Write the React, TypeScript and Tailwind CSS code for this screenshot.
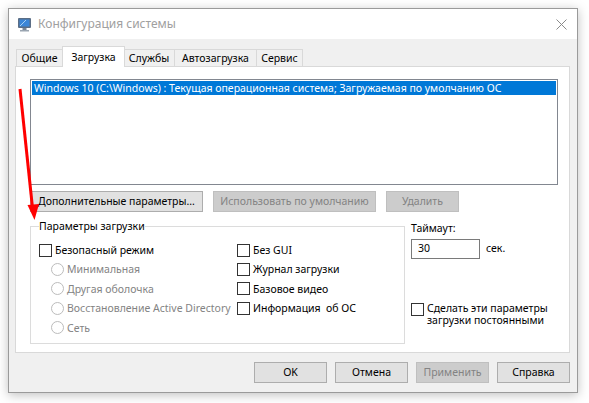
import React from "react";

const font = { fontFamily: '"Segoe UI", "Noto Sans", sans-serif' };

function Btn({
  children,
  w,
  disabled,
}: {
  children: React.ReactNode;
  w: string;
  disabled?: boolean;
}) {
  return (
    <div
      className={
        "h-[21px] flex items-center justify-center border text-[10.5px] leading-none whitespace-nowrap " +
        w +
        (disabled
          ? " bg-[#cccccc] border-[#bfbfbf] text-[#838383]"
          : " bg-[#e1e1e1] border-[#adadad] text-black")
      }
    >
      {children}
    </div>
  );
}

function Check({ label }: { label: string }) {
  return (
    <div className="h-[19.4px] flex items-center">
      <div className="w-[13px] h-[13px] border border-[#333333] bg-white shrink-0" />
      <span className="ml-[3px] text-[10.5px] leading-none text-black whitespace-pre">
        {label}
      </span>
    </div>
  );
}

function Radio({ label }: { label: string }) {
  return (
    <div className="h-[19.4px] flex items-center pl-[12px]">
      <div className="w-[13px] h-[13px] rounded-full border border-[#bcbcbc] bg-white shrink-0" />
      <span className="ml-[3px] text-[10.5px] leading-none text-[#838383] whitespace-nowrap">
        {label}
      </span>
    </div>
  );
}

function Tab({ label, active, w }: { label: string; active?: boolean; w: string }) {
  return active ? (
    <div
      className={
        "h-[21px] -mx-[1px] relative z-10 bg-white border border-b-0 border-[#d9d9d9] flex items-center justify-center text-[10.5px] leading-none text-black " +
        w
      }
    >
      {label}
    </div>
  ) : (
    <div
      className={
        "h-[18px] mt-[3px] bg-[#f0f0f0] border border-b-0 border-[#d9d9d9] -ml-[1px] first:ml-0 flex items-center justify-center text-[10.5px] leading-none text-black " +
        w
      }
    >
      {label}
    </div>
  );
}

function MonitorIcon() {
  return (
    <svg width="15" height="15" viewBox="0 0 15 15">
      <rect x="1" y="1" width="13" height="10" rx="1" fill="#5b6e86" />
      <rect x="2.5" y="2.5" width="10" height="7" fill="#3b86d8" />
      <path d="M3 9 L9 3" stroke="#a9d2f5" strokeWidth="1" />
      <rect x="5.5" y="11" width="4" height="2" fill="#7a8797" />
      <rect x="3" y="13" width="9" height="1.5" fill="#9aa5b1" />
    </svg>
  );
}

export default function App() {
  return (
    <div className="relative w-[589px] h-[403px] bg-white overflow-hidden" style={font}>
      <div className="pt-[8px] pl-[8px]">
        <div className="w-[570px] h-[385px] border border-[#9a9a9a] bg-[#f0f0f0] shadow-[0_2px_10px_rgba(0,0,0,0.25)] flex flex-col">
          {/* title bar */}
          <div className="h-[30px] bg-white flex items-center shrink-0">
            <div className="ml-[8px] mt-[1px]">
              <MonitorIcon />
            </div>
            <span className="ml-[6px] text-[12px] leading-none text-[#a0a0a0]">
              Конфигурация системы
            </span>
            <svg className="ml-auto mr-[10px]" width="11" height="11" viewBox="0 0 11 11">
              <path d="M0.5 0.5 L10.5 10.5 M10.5 0.5 L0.5 10.5" stroke="#8a8a8a" strokeWidth="1" />
            </svg>
          </div>

          {/* tabs */}
          <div className="pl-[7px] pt-[7px] flex items-end h-[28px] shrink-0">
            <Tab label="Общие" w="w-[47px]" />
            <Tab label="Загрузка" active w="w-[63px]" />
            <Tab label="Службы" w="w-[52px]" />
            <Tab label="Автозагрузка" w="w-[83px]" />
            <Tab label="Сервис" w="w-[47px]" />
          </div>

          {/* panel */}
          <div className="ml-[6px] w-[555px] h-[287px] -mt-[1px] bg-white border border-[#d9d9d9] pl-[14px] pt-[12px]">
            <div className="w-[528px] h-[106px] border border-[#828790] p-[1px]">
              <div className="h-[14px] bg-[#0078d7] text-white text-[10.5px] leading-[14px] pl-[2px] whitespace-nowrap">
                Windows 10 (C:\Windows) : Текущая операционная система; Загружаемая по умолчанию ОС
              </div>
            </div>

            <div className="flex gap-[10px] mt-[6px]">
              <Btn w="w-[173px]">Дополнительные параметры...</Btn>
              <Btn w="w-[163px]" disabled>
                Использовать по умолчанию
              </Btn>
              <Btn w="w-[73px]" disabled>
                Удалить
              </Btn>
            </div>

            <div className="flex mt-[15px]">
              {/* group box */}
              <fieldset className="w-[375px] h-[123px] border border-[#dcdcdc] pl-[8px] pr-0 pb-0 pt-0 -mt-[6px]">
                <legend className="text-[10.5px] leading-none text-black px-0 ml-0 pb-[1px]">
                  Параметры загрузки
                </legend>
                <div className="flex mt-[8px]">
                  <div className="w-[198px] flex flex-col">
                    <Check label="Безопасный режим" />
                    <Radio label="Минимальная" />
                    <Radio label="Другая оболочка" />
                    <Radio label="Восстановление Active Directory" />
                    <Radio label="Сеть" />
                  </div>
                  <div className="flex flex-col">
                    <Check label="Без GUI" />
                    <Check label="Журнал загрузки" />
                    <Check label="Базовое видео" />
                    <Check label="Информация  об ОС" />
                  </div>
                </div>
              </fieldset>

              {/* right side */}
              <div className="ml-[6px] flex flex-col">
                <div className="text-[10.5px] leading-none text-black -mt-[4px]">Таймаут:</div>
                <div className="flex items-center mt-[5px]">
                  <div className="w-[69px] h-[20px] border border-[#7a7a7a] bg-white text-[10.5px] leading-none text-black flex items-center pl-[6px]">
                    30
                  </div>
                  <span className="ml-[6px] text-[10.5px] leading-none text-black">сек.</span>
                </div>
                <div className="flex mt-[44px]">
                  <div className="w-[13px] h-[13px] border border-[#333333] bg-white shrink-0" />
                  <div className="ml-[3px] text-[10.5px] leading-[12.5px] text-black -mt-[1px] whitespace-nowrap">
                    Сделать эти параметры
                    <br />
                    загрузки постоянными
                  </div>
                </div>
              </div>
            </div>
          </div>

          {/* bottom buttons */}
          <div className="flex justify-end gap-[8px] pr-[7px] mt-[9px]">
            <Btn w="w-[73px]">OK</Btn>
            <Btn w="w-[73px]">Отмена</Btn>
            <Btn w="w-[73px]" disabled>
              Применить
            </Btn>
            <Btn w="w-[73px]">Справка</Btn>
          </div>
        </div>
      </div>

      {/* red annotation arrow */}
      <svg className="absolute left-0 top-0 pointer-events-none" width="589" height="403">
        <line x1="20" y1="89" x2="32.5" y2="208" stroke="#ff0000" strokeWidth="3" />
        <polygon points="27.5,205 39,204 34.5,220" fill="#ff0000" />
      </svg>
    </div>
  );
}
